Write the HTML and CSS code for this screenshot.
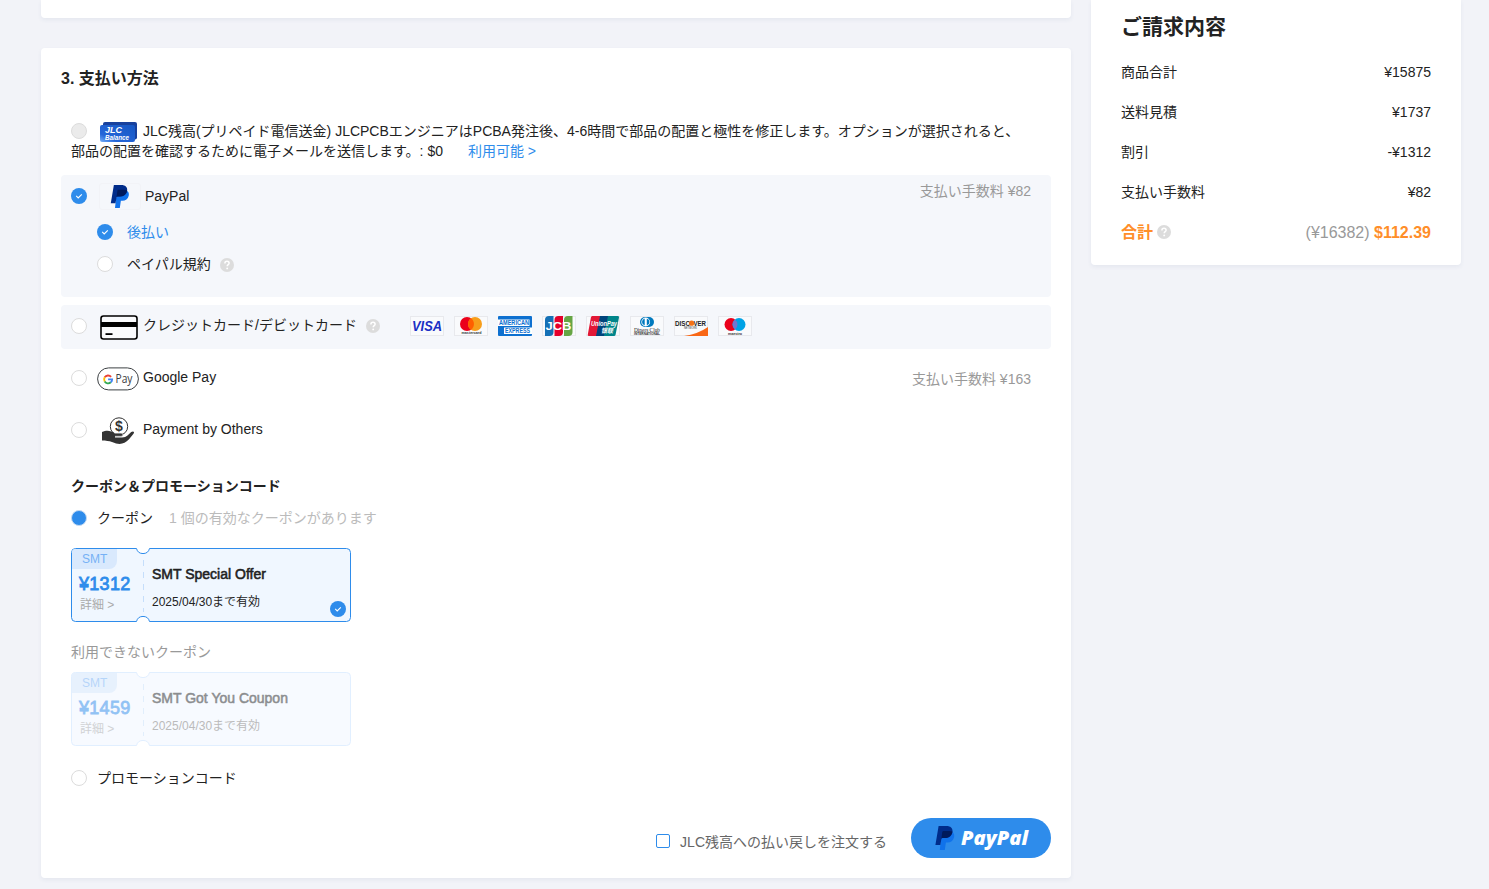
FILE: index.html
```html
<!DOCTYPE html>
<html lang="ja">
<head>
<meta charset="utf-8">
<title>支払い方法</title>
<link rel="stylesheet" href="styles.css">
</head>
<body>
<svg width="0" height="0" class="defs">
  <symbol id="pp" viewBox="0 0 20 24">
    <path fill="#1072eb" d="M6.500 8h8.500V5.200l2.200.7c1.900 1.100 2.400 3 1.900 5.300-.8 3.600-3.400 5.300-6.600 5.300h-1.600L9.800 24H4.800z"/>
    <path fill="#002c8a" d="M3.600 0h8c3.800 0 6.200 2.200 5.900 5.400-.4 4.200-3.500 6.700-7.700 6.700H7.400c-.5 0-.9.3-1 .8L5.300 19H.4z"/>
    <path fill="#001a5c" d="M7.200 6.300c.1-.7.600-1.300 1.300-1.300h5.700c1.200 0 2.200.2 3.200.6-.5 4.100-3.400 6.500-7.600 6.500H7.400c-.5 0-.9.3-1 .8z"/>
  </symbol>
  <symbol id="tick" viewBox="0 0 16 16">
    <circle cx="8" cy="8" r="8" fill="#2e8ceb"/>
    <path d="M5.200 7.900l2 2 3.600-3.600" fill="none" stroke="#fff" stroke-width="1.100"/>
  </symbol>
  <symbol id="help" viewBox="0 0 14 14">
    <circle cx="7" cy="7" r="7" fill="#dcdcdc"/>
    <path d="M4.900 5.400c0-1.300.9-2.100 2.100-2.100s2.100.8 2.100 1.900c0 1.500-1.900 1.500-1.900 3.100" fill="none" stroke="#fff" stroke-width="1.500"/>
    <circle cx="7.200" cy="10.400" r=".95" fill="#fff"/>
  </symbol>
</svg>
<div class="page">
  <main class="main">
    <section class="card card-prev"></section>
    <section class="card payment">
      <h2 class="title">3. 支払い方法</h2>

      <div class="balance">
        <span class="radio disabled"></span><svg class="jlc" width="37" height="22" viewBox="0 0 37 22"><defs><linearGradient id="jg" x1="0" x2="1" y1="1" y2="0"><stop offset="0" stop-color="#79b2fa"/><stop offset=".25" stop-color="#2566d8"/><stop offset="1" stop-color="#1657c4"/></linearGradient></defs><rect x="3" y="1" width="34" height="17.500" rx="2" fill="#18419d"/><rect y="4" width="35" height="17" rx="2" fill="url(#jg)"/><text x="5" y="12" class="jlc-a" textLength="17" lengthAdjust="spacingAndGlyphs">JLC</text><text x="5" y="18.500" class="jlc-b" textLength="24" lengthAdjust="spacingAndGlyphs">Balance</text></svg><span>JLC残高(プリペイド電信送金) </span><span>JLCPCBエンジニアはPCBA発注後、4-6時間で部品の配置と極性を修正します。オプションが選択されると、<br>部品の配置を確認するために電子メールを送信します。: $0</span><a class="link">利用可能 &gt;</a>
      </div>

      <div class="panel paypal">
        <div class="row">
          <svg width="16" height="16"><use href="#tick"/></svg>
          <span class="pp-box"><svg width="20" height="23"><use href="#pp"/></svg></span>
          <span>PayPal</span>
          <span class="fee fee-up">支払い手数料 ¥82</span>
        </div>
        <div class="row sub sub-on">
          <svg width="16" height="16"><use href="#tick"/></svg>
          <span class="blue">後払い</span>
        </div>
        <div class="row sub">
          <span class="radio"></span>
          <span class="terms">ペイパル規約</span>
          <svg class="help" width="14" height="14"><use href="#help"/></svg>
        </div>
      </div>

      <div class="panel credit">
        <span class="radio"></span>
        <svg class="cc" width="38" height="25" viewBox="0 0 38 25"><rect x="1" y="1" width="36" height="23" rx="2.500" fill="#fff" fill-opacity=".5" stroke="#000" stroke-width="1.600"/><path d="M1 7h36v5H1z"/><path d="M5.500 18.200h7v1.800h-7z"/></svg>
        <span>クレジットカード/デビットカード</span>
        <svg class="cc-help" width="14" height="14"><use href="#help"/></svg>
        <div class="brands">
          <svg viewBox="0 0 34 20"><rect class="bd" x=".5" y=".5" width="33" height="19"/><text class="b visa" x="2" y="15" textLength="30" lengthAdjust="spacingAndGlyphs">VISA</text></svg>
          <svg viewBox="0 0 34 20"><rect class="bd" x=".5" y=".5" width="33" height="19"/><circle cx="13" cy="8" r="7" fill="#eb001b"/><circle cx="21" cy="8" r="7" fill="#f79e1b"/><path d="M17 2.300a7 7 0 0 1 0 11.400a7 7 0 0 1 0-11.400" fill="#ff5f00"/><text class="b tiny" x="7.500" y="18.200" textLength="20" lengthAdjust="spacingAndGlyphs">mastercard</text></svg>
          <svg viewBox="0 0 34 20"><rect width="34" height="20" rx="1" fill="#0d70d0"/><path d="M0 3.500h31.500v6.500H0zM6 11.500h28v6.500H6z" fill="#fff"/><text class="b amex" x="1" y="9.200" textLength="30" lengthAdjust="spacingAndGlyphs">AMERICAN</text><text class="b amex" x="7" y="17.200" textLength="25" lengthAdjust="spacingAndGlyphs">EXPRESS</text></svg>
          <svg viewBox="0 0 34 20"><rect class="bd" x=".5" y=".5" width="33" height="19"/><path d="M7 0h4.500v16q0 4-4 4H3V4q0-4 4-4z" fill="#1470b6"/><path d="M16.500 0h4.500v16q0 4-4 4h-4.500V4q0-4 4-4z" fill="#e4002b"/><path d="M26 0h4.500v16q0 4-4 4H22V4q0-4 4-4z" fill="#66a544"/><text class="b jcb" x="3.500" y="14" textLength="26" lengthAdjust="spacingAndGlyphs">JCB</text></svg>
          <svg viewBox="0 0 34 20"><rect class="bd" x=".5" y=".5" width="33" height="19"/><path d="M6 0h9l-4 20H3q-1.500 0-1.200-1.500L5 1z" fill="#e21836"/><path d="M14 0h9l-4 20h-9z" fill="#00447c"/><path d="M22 0h10q1.300 0 1 1.500L29.500 19q-.3 1-1.500 1H18z" fill="#00858a"/><text class="b union" x="5" y="10" textLength="26" lengthAdjust="spacingAndGlyphs">UnionPay</text><text class="b union" x="15" y="17" textLength="12" lengthAdjust="spacingAndGlyphs">银联</text></svg>
          <svg viewBox="0 0 34 20"><rect class="bd" x=".5" y=".5" width="33" height="19"/><path d="M15 1h4a5 5 0 0 1 0 10h-4A5 5 0 0 1 15 1z" fill="#0079be"/><circle cx="15.700" cy="6" r="4.400" fill="#fff"/><path d="M14.700 2.600v6.800a3.500 3.500 0 0 1 0-6.800M16.800 2.600v6.800a3.500 3.500 0 0 0 0-6.800" fill="#0079be"/><text class="diners" x="4" y="16" textLength="26" lengthAdjust="spacingAndGlyphs">Diners Club</text><text class="b tiny" x="4" y="19.300" textLength="26" lengthAdjust="spacingAndGlyphs">INTERNATIONAL</text></svg>
          <svg viewBox="0 0 34 20"><rect class="bd" x=".5" y=".5" width="33" height="19"/><path d="M34 11v9H10q14-2 24-9z" fill="#f96716"/><text class="b disc" x="1" y="9.500" textLength="15" lengthAdjust="spacingAndGlyphs">DISC</text><text class="b disc" x="19.500" y="9.500" textLength="12.500" lengthAdjust="spacingAndGlyphs">VER</text><circle cx="17.600" cy="7.200" r="2.600" fill="#f47216"/><text class="tiny" x="10" y="13" textLength="13" lengthAdjust="spacingAndGlyphs">NETWORK</text></svg>
          <svg viewBox="0 0 34 20"><rect class="bd" x=".5" y=".5" width="33" height="19"/><circle cx="13" cy="8.500" r="6.500" fill="#eb001b"/><circle cx="21" cy="8.500" r="6.500" fill="#00a2e5"/><path d="M17 3.400a6.500 6.500 0 0 1 0 10.200a6.500 6.500 0 0 1 0-10.200" fill="#7375cf"/><text class="b tiny" x="10" y="18.500" textLength="14" lengthAdjust="spacingAndGlyphs">maestro</text></svg>
        </div>
      </div>

      <div class="option">
        <span class="radio"></span>
        <svg class="gpay" width="42" height="24" viewBox="0 0 42 24"><rect x=".6" y=".9" width="40.800" height="22" rx="11" fill="#fff" stroke="#3c4043" stroke-width="1"/><g fill="none" stroke-width="1.900"><path d="M14.100 9.800A4 4 0 0 0 7.700 10.300" stroke="#ea4335"/><path d="M7.700 10.300a4 4 0 0 0 0 4.200" stroke="#fbbc04"/><path d="M7.700 14.500a4 4 0 0 0 6.100.8" stroke="#34a853"/><path d="M13.800 15.300a4 4 0 0 0 1.300-2.900h-4" stroke="#4285f4"/></g><text x="18.500" y="16.200" class="gp" textLength="17" lengthAdjust="spacingAndGlyphs">Pay</text></svg>
        <span>Google Pay</span>
        <span class="fee">支払い手数料 ¥163</span>
      </div>
      <div class="option">
        <span class="radio"></span>
        <svg class="hand" width="34" height="28" viewBox="0 0 34 28"><circle cx="18" cy="9.500" r="8.700" fill="#fff" stroke="#333" stroke-width="1"/><text x="18" y="14.300" class="dollar">$</text><path d="M1 15c5-2.300 9-1.200 12.500 1h6.500c2.700.2 2.700 3.200 0 3.600h-6v.8h7c2.500 0 4-.7 5.500-2l3.700-3.300c1.900-1.200 3.800-.2 2.300 1.700-3 3.700-6 7.700-9 9-4 1.900-7.500 1.300-12.500-.8-3-1-6-1.500-10-1.500z" fill="#333"/><path d="M13.500 16.200h6.500c2.300.2 2.300 2.800 0 3.100h-6" fill="none" stroke="#fff" stroke-width=".6"/></svg>
        <span>Payment by Others</span>
      </div>

      <h3 class="subtitle">クーポン＆プロモーションコード</h3>
      <div class="pick"><span class="radio full"></span><span>クーポン</span><span class="hint">1 個の有効なクーポンがあります</span></div>

      <div class="coupon">
        <svg class="frame" width="280" height="74" viewBox="0 0 280 74"><path d="M4.500.5H65.500a6.700 6.700 0 0 0 13 0H275.500a4 4 0 0 1 4 4V69.500a4 4 0 0 1-4 4H78.500a6.700 6.700 0 0 0-13 0H4.500a4 4 0 0 1-4-4V4.500a4 4 0 0 1 4-4z" fill="#f0f7ff" stroke="#2e8ceb"/><path d="M72.500 12v52" stroke="#c5defb" stroke-dasharray="6 6"/></svg>
        <div class="left"><span class="tag">SMT</span><b class="amount">¥1312</b><span class="detail">詳細 &gt;</span></div>
        <div class="right"><span class="name">SMT Special Offer</span><span class="date">2025/04/30まで有効</span></div>
        <svg class="chosen" width="16" height="16"><use href="#tick"/></svg>
      </div>
      <div class="label">利用できないクーポン</div>
      <div class="coupon off">
        <svg class="frame" width="280" height="74" viewBox="0 0 280 74"><path d="M4.500.5H65.500a6.700 6.700 0 0 0 13 0H275.500a4 4 0 0 1 4 4V69.500a4 4 0 0 1-4 4H78.500a6.700 6.700 0 0 0-13 0H4.500a4 4 0 0 1-4-4V4.500a4 4 0 0 1 4-4z" fill="#f0f7ff" stroke="#c5e0ff"/><path d="M72.500 12v52" stroke="#c5defb" stroke-dasharray="6 6"/></svg>
        <div class="left"><span class="tag">SMT</span><b class="amount">¥1459</b><span class="detail">詳細 &gt;</span></div>
        <div class="right"><span class="name">SMT Got You Coupon</span><span class="date">2025/04/30まで有効</span></div>
      </div>
      <div class="pick promo"><span class="radio"></span><span>プロモーションコード</span></div>

      <div class="actions">
        <span class="check"></span>
        <span class="refund">JLC残高への払い戻しを注文する</span>
        <div class="paybtn"><svg width="20" height="24"><use href="#pp"/></svg><svg width="70" height="26" viewBox="0 0 70 26"><text x="1" y="20" class="pptext" textLength="67" lengthAdjust="spacingAndGlyphs">PayPal</text></svg></div>
      </div>
    </section>
  </main>

  <aside class="card summary">
    <h2 class="sum-title">ご請求内容</h2>
    <div class="line"><span>商品合計</span><span>¥15875</span></div>
    <div class="line"><span>送料見積</span><span>¥1737</span></div>
    <div class="line"><span>割引</span><span>-¥1312</span></div>
    <div class="line"><span>支払い手数料</span><span>¥82</span></div>
    <div class="line total"><span class="orange">合計</span><svg width="14" height="14"><use href="#help"/></svg><span class="grand"><span class="yen">(¥16382)</span> <b class="orange">$112.39</b></span></div>
  </aside>
</div>
</body>
</html>
```
FILE: styles.css
```css
* { box-sizing: border-box; }
body {
  margin: 0;
  height: 889px;
  overflow: hidden;
  background: #f2f3f8;
  color: #222;
  font: 14px/20px "Liberation Sans", "Noto Sans CJK JP", sans-serif;
}
h2, h3 { margin: 0; }
svg { display: block; flex: none; }
.defs { position: absolute; }
.page { display: flex; align-items: flex-start; gap: 20px; padding-left: 41px; }
.main { width: 1030px; }
.card { background: #fff; border-radius: 4px; box-shadow: 0 2px 4px rgba(60, 80, 130, .07); }
.card-prev { height: 18px; margin-bottom: 30px; border-radius: 0 0 4px 4px; }
.payment { height: 830px; padding: 21px 20px 20px; }
.title { font-size: 16px; line-height: 20px; }

.radio { display: block; flex: none; width: 16px; height: 16px; border: 1px solid #dcdcdc; border-radius: 50%; background: #fff; }
.radio.disabled { display: inline-block; vertical-align: middle; background: #ebebeb; margin: -2px 13px 0 0; }
.radio.full { background: #2e8ceb; border-color: #c3d9f2; }
.blue, .link { color: #2e8ceb; }
.blue, .terms { margin-top: -1px; }

.balance { margin: 32px 0 0; padding-left: 10px; height: 54px; white-space: nowrap; }
.jlc { display: inline-block; vertical-align: middle; margin: -2px 6px -2px 0; }
.jlc-a { font: italic bold 9px "Liberation Sans", sans-serif; fill: #fff; }
.jlc-b { font: italic bold 6.5px "Liberation Sans", sans-serif; fill: #fff; }
.link { margin-left: 25px; }

.panel { background: #f5f7fb; border-radius: 4px; padding-left: 10px; }
.paypal { height: 122px; padding-top: 11px; }
.row { display: flex; align-items: center; height: 20px; }
.pp-box { display: flex; justify-content: center; width: 42px; height: 27px; margin: 0 4px 0 12px; padding-top: 1px; border: 1px solid #f2f3f7; border-radius: 3px; }
.fee { margin-left: auto; padding-right: 20px; color: #999; }
.fee-up { margin-top: -10px; }
.sub { padding-left: 26px; margin-top: 12px; gap: 14px; }
.sub-on { margin-top: 16px; }
.help { margin: 2px 0 0 -5px; }

.credit { display: flex; align-items: center; height: 44px; margin-top: 8px; padding-bottom: 2px; }
.credit > span:not(.radio) { margin-top: -2px; }
.cc { margin: 2px 5px 0 13px; }
.cc-help { margin-left: 9px; }
.brands { display: flex; gap: 10px; margin-left: 30px; }
.brands svg { width: 34px; height: 20px; }
.bd { fill: #f9fafc; stroke: #e8e9ed; }
.b { font-family: "Liberation Sans", "Noto Sans CJK SC", sans-serif; font-weight: bold; }
.visa { font-size: 15px; font-style: italic; fill: #1a2fc4; }
.tiny { font-size: 3.6px; fill: #333; }
.amex { font-size: 7px; fill: #0d70d0; }
.jcb { font-size: 10px; fill: #fff; }
.union { font-size: 6.5px; font-style: italic; fill: #fff; }
.diners { font: 6px "Liberation Serif", serif; fill: #222; }
.disc { font-size: 7px; fill: #222; }

.option { display: flex; align-items: center; height: 52px; padding-left: 10px; }
.panel + .option { margin-top: 3px; }
.option > span:not(.radio) { margin-top: -2px; }
.option > span.fee:not(.radio) { margin-top: 2px; }
.gpay { margin: 1px 4px 0 10px; }
.gp { font: 12px "Open Sans", sans-serif; fill: #3c4043; }
.hand { margin: 2px 8px 0 14px; }
.dollar { font: bold 14px "Liberation Sans", sans-serif; text-anchor: middle; fill: #333; }

.subtitle { margin: 20px 0 0 10px; font-size: 14px; line-height: 20px; }
.pick { display: flex; align-items: center; height: 20px; margin: 12px 0 0 10px; gap: 10px; }
.hint { margin-left: 6px; color: #bbb; }

.coupon { position: relative; display: flex; width: 280px; height: 74px; margin: 20px 0 0 10px; }
.frame { position: absolute; inset: 0; }
.left { position: relative; width: 81px; padding: 1px 0 0 1px; display: flex; flex-direction: column; }
.tag { width: 45px; height: 20px; padding-left: 10px; font-size: 12px; background: #d9e9fd; color: #76b1f5; border-radius: 3px 0 8px 0; }
.amount { padding-left: 7px; margin-top: 4px; font-size: 18px; font-weight: 400; line-height: 22px; letter-spacing: .3px; color: #2e8ceb; -webkit-text-stroke: .8px #2e8ceb; }
.detail { padding-left: 8px; font-size: 12px; color: #aaa; }
.right { position: relative; display: flex; flex-direction: column; gap: 8px; padding-top: 16px; }
.name { -webkit-text-stroke: .55px #222; }
.date { font-size: 12px; }
.chosen { position: absolute; right: 5px; bottom: 5px; }
.label { margin: 20px 0 0 10px; color: #999; height: 20px; }
.off { margin-top: 10px; }
.off .frame, .off .left, .off .right .name { opacity: .5; }
.off .date { color: #bbb; }
.promo { margin-top: 22px; }

.actions { display: flex; align-items: center; justify-content: flex-end; margin-top: 30px; height: 40px; }
.check { width: 14px; height: 14px; margin: 6px 10px 0 0; border: 1px solid #2e8ceb; border-radius: 2px; background: #fff; }
.refund { margin: 8px 24px 0 0; color: #666; }
.paybtn { display: flex; align-items: center; gap: 5px; width: 140px; height: 40px; padding-left: 24px; border-radius: 20px; background: #2e8ceb; }
.pptext { font: italic 800 19px "Open Sans", Lato, sans-serif; fill: #fff; }

.summary { width: 370px; height: 265px; padding: 12px 30px 0; border-radius: 0 0 4px 4px; }
.sum-title { font-size: 21px; line-height: 30px; margin-bottom: 10px; }
.line { display: flex; align-items: center; justify-content: space-between; height: 40px; }
.total { justify-content: flex-start; gap: 4px; padding-top: 1px; font-size: 16px; }
.total svg { margin-top: -2px; }
.grand { margin-left: auto; }
.yen { color: #999; }
.orange { color: #ff8e29; font-weight: bold; }
```
